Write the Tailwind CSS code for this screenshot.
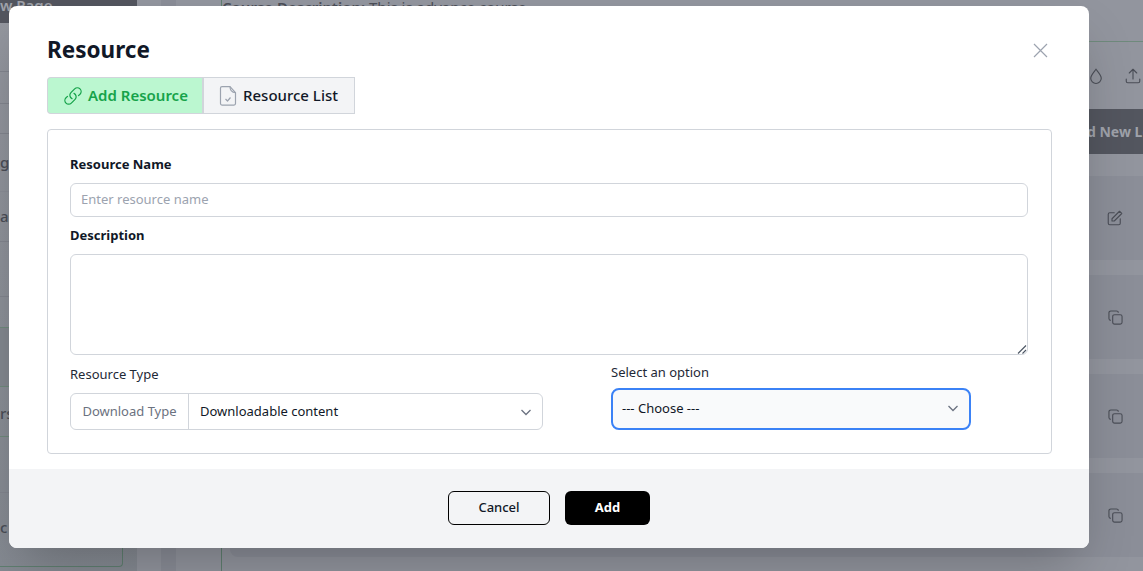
<!DOCTYPE html>
<html lang="en">
<head>
  <meta charset="UTF-8" />
  <title>Resource</title>
  <script src="https://cdn.jsdelivr.net/npm/@tailwindcss/browser@4"></script>
</head>
<body class="font-['Noto_Sans',sans-serif] overflow-hidden">
  <!-- page behind the modal, dimmed -->
  <div class="relative flex h-[571px] w-[1143px] overflow-hidden bg-[#92959e] text-[#4b4e57]">
    <aside class="w-[137px] shrink-0 flex flex-col text-[15px] font-medium bg-gradient-to-b from-[#94979f] to-[#858a92]">
      <div class="h-[23px] bg-[#53565f] text-[#9fa2aa] font-semibold leading-[10px]">w Page</div>
      <div class="h-[49px] border-b border-[#82858e]"></div>
      <div class="h-[32px] border-b border-[#82858e]"></div>
      <div class="h-[30px] border-b border-[#82858e]"></div>
      <div class="h-[58px] border-b border-[#8a8d96] pt-[17px]">g</div>
      <div class="h-[50px] border-b border-[#82858e] pt-[13px]">as</div>
      <div class="h-[55px] border-b border-[#82858e]"></div>
      <div class="h-[31px] border-b border-[#6f8a7c]"></div>
      <div class="h-[59px] border-b border-[#6f8a7c] bg-[#83888f]"></div>
      <div class="h-[50px] border-b border-[#6f8a7c] pt-[15px]">rs</div>
      <div class="h-[56px] border-b border-[#82858e]"></div>
      <div class="h-[74px] w-[123px] border-r border-b border-[#5f7f70] rounded-br pt-[23px]">c</div>
    </aside>
    <div class="w-[85px] shrink-0 flex border-r border-[#5f7f70]">
      <div class="w-[24px] bg-[#92959e]"></div>
      <div class="w-[15px] bg-[#8a8d97]"></div>
      <div class="flex-1 bg-[#92959e]"></div>
    </div>
    <main class="flex-1 flex flex-col items-end">
      <div class="h-[42px] w-full border-b border-[#6f8a7c] text-[15px] font-semibold leading-[14px] whitespace-nowrap">Course Description: <span class="font-normal">This is advance course</span></div>
      <div class="h-[67px] flex items-start gap-[19px] pt-[25px] pr-[1px]">
        <svg class="size-[18px]" viewBox="0 0 24 24" fill="none" stroke="currentColor" stroke-width="1.5"><path d="M12 3c3 4 7 8 7 12a7 7 0 0 1-14 0c0-4 4-8 7-12z"/></svg>
        <svg class="size-[18px]" viewBox="0 0 24 24" fill="none" stroke="currentColor" stroke-width="1.5" stroke-linecap="round" stroke-linejoin="round"><path d="M3 16v3a2 2 0 0 0 2 2h14a2 2 0 0 0 2-2v-3M12 16V3M7 8l5-5 5 5"/></svg>
      </div>
      <div class="h-[45px] w-[56px] bg-[#53565f] text-[#9fa2aa] text-[14px] font-bold leading-[45px] whitespace-nowrap overflow-hidden">d New Lesson</div>
      <div class="w-full flex flex-col gap-[15px] pt-[22px] pl-[8px]">
        <div class="h-[84px] bg-[#8b8e98] rounded-l-lg flex items-center justify-end pr-[19px]">
          <svg class="size-[18px]" viewBox="0 0 24 24" fill="none" stroke="currentColor" stroke-width="1.5" stroke-linecap="round" stroke-linejoin="round"><path d="M11 5H5a2 2 0 0 0-2 2v12a2 2 0 0 0 2 2h12a2 2 0 0 0 2-2v-6"/><path d="M18 3l3 3-10 10H8v-3L18 3z"/></svg>
        </div>
        <div class="h-[84px] bg-[#8b8e98] rounded-l-lg flex items-center justify-end pr-[20px]">
          <svg class="size-[15px]" viewBox="0 0 16 16" fill="none" stroke="currentColor" stroke-width="1.200"><rect x="5" y="5" width="10" height="10" rx="2"/><path d="M11 3V3a2 2 0 0 0-2-2H3a2 2 0 0 0-2 2v6a2 2 0 0 0 2 2"/></svg>
        </div>
        <div class="h-[84px] bg-[#8b8e98] rounded-l-lg flex items-center justify-end pr-[20px]">
          <svg class="size-[15px]" viewBox="0 0 16 16" fill="none" stroke="currentColor" stroke-width="1.200"><rect x="5" y="5" width="10" height="10" rx="2"/><path d="M11 3V3a2 2 0 0 0-2-2H3a2 2 0 0 0-2 2v6a2 2 0 0 0 2 2"/></svg>
        </div>
        <div class="h-[84px] bg-[#8b8e98] rounded-l-lg flex items-center justify-end pr-[20px]">
          <svg class="size-[15px]" viewBox="0 0 16 16" fill="none" stroke="currentColor" stroke-width="1.200"><rect x="5" y="5" width="10" height="10" rx="2"/><path d="M11 3V3a2 2 0 0 0-2-2H3a2 2 0 0 0-2 2v6a2 2 0 0 0 2 2"/></svg>
        </div>
      </div>
    </main>

    <!-- modal -->
    <div class="absolute left-[9px] top-[6px] w-[1080px] h-[542px] bg-white rounded-lg shadow-2xl overflow-hidden flex flex-col text-[#111827]">
      <div class="relative flex-1 pl-[38px] pr-[37px] pt-[28px]">
        <h2 class="text-[22.5px] leading-[32px] font-bold">Resource</h2>
        <button class="absolute right-[41px] top-[37px] text-[#9ca3af]">
          <svg class="size-[15px] block" viewBox="0 0 15 15" fill="none" stroke="currentColor" stroke-width="1.2"><path d="M1 1l13 13M14 1L1 14"/></svg>
        </button>

        <div class="mt-[11px] flex h-[37px] text-[15px] font-medium">
          <div class="w-[155px] flex items-center gap-[5px] pl-[15px] bg-[#bbf7d0] text-[#16a34a] border border-[#d1d5db] border-r-0 rounded-l font-semibold">
            <svg class="size-[20px]" viewBox="0 0 24 24" fill="none" stroke="currentColor" stroke-width="1.5" stroke-linecap="round" stroke-linejoin="round"><path d="M13.2 8.8a4.5 4.5 0 0 1 1.3 7.2l-4.5 4.5a4.5 4.5 0 0 1-6.4-6.4l1.8-1.7"/><path d="M10.8 15.2a4.5 4.5 0 0 1-1.3-7.2l4.5-4.5a4.5 4.5 0 0 1 6.4 6.4l-1.8 1.7"/></svg>
            Add Resource
          </div>
          <div class="w-[153px] flex items-center gap-[5px] pl-[14px] bg-[#f3f4f6] border border-[#d1d5db] border-l-2">
            <svg class="size-[20px]" viewBox="0 0 20 20" fill="none" stroke="#9ca3af" stroke-width="1.2" stroke-linejoin="round"><path d="M4 .6h8l5.500 6v11a1.500 1.500 0 0 1-1.500 1.500H4a1.500 1.500 0 0 1-1.500-1.500V2.100A1.500 1.500 0 0 1 4 .6z"/><path d="M12 .6c0 4 1.500 6 5.500 6"/><path d="M7.500 13l2 2 3-3.500"/></svg>
            Resource List
          </div>
        </div>

        <form class="mt-[15px] h-[325px] border border-[#d1d5db] rounded px-[22px] pt-[25px]">
          <label class="block text-[13px] leading-[18px] font-bold">Resource Name</label>
          <input type="text" placeholder="Enter resource name" class="mt-[10px] block w-[958px] h-[34px] px-[10px] pb-[2px] border border-[#d1d5db] rounded-md text-[13px] placeholder:text-[#9ca3af]" />
          <label class="mt-[9px] block text-[13px] leading-[18px] font-bold">Description</label>
          <div class="relative mt-[10px] w-[958px]">
            <textarea class="block w-full h-[101px] resize-none border border-[#d1d5db] rounded-md"></textarea>
            <svg class="absolute right-[1px] bottom-[1px] size-[10px] pointer-events-none" viewBox="0 0 10 10" fill="none" stroke="#4b5563" stroke-width="1.100"><path d="M1 9.500L9 1.500M5.500 9.500L9 6"/></svg>
          </div>
          <div class="mt-[8px] flex items-end gap-[68px]">
            <div class="w-[473px]">
              <label class="block text-[13px] leading-[18px] text-[#1f2937]">Resource Type</label>
              <div class="mt-[10px] flex h-[37px] border border-[#d1d5db] rounded-md text-[13px]">
                <span class="w-[118px] shrink-0 flex items-center justify-center text-[#6b7280] border-r border-[#d1d5db]">Download Type</span>
                <div class="relative flex-1">
                  <select class="appearance-none w-full h-full pl-[11px] bg-transparent outline-none"><option>Downloadable content</option></select>
                  <svg class="absolute right-[10px] top-[12px] size-[12px] pointer-events-none" viewBox="0 0 12 12" fill="none" stroke="#6b7280" stroke-width="1.300"><path d="M1.500 4l4.500 4.500L10.500 4"/></svg>
                </div>
              </div>
            </div>
            <div class="w-[360px]">
              <label class="block text-[13px] leading-[18px] text-[#1f2937]">Select an option</label>
              <div class="relative mt-[7px]">
                <select class="appearance-none block w-full h-[42px] pl-[9px] bg-[#f9fafb] border-2 border-[#3b82f6] rounded-lg text-[13px] outline-none"><option>--- Choose ---</option></select>
                <svg class="absolute right-[12px] top-[14px] size-[12px] pointer-events-none" viewBox="0 0 12 12" fill="none" stroke="#6b7280" stroke-width="1.300"><path d="M1.500 4l4.500 4.500L10.500 4"/></svg>
              </div>
            </div>
          </div>
        </form>
      </div>
      <div class="h-[79px] bg-[#f3f4f6] flex items-start justify-center gap-[15px] pt-[22px] text-[13px]">
        <button class="w-[102px] h-[34px] border border-black rounded-md font-medium">Cancel</button>
        <button class="w-[85px] h-[34px] bg-black text-white rounded-md font-bold">Add</button>
      </div>
    </div>
  </div>
</body>
</html>
